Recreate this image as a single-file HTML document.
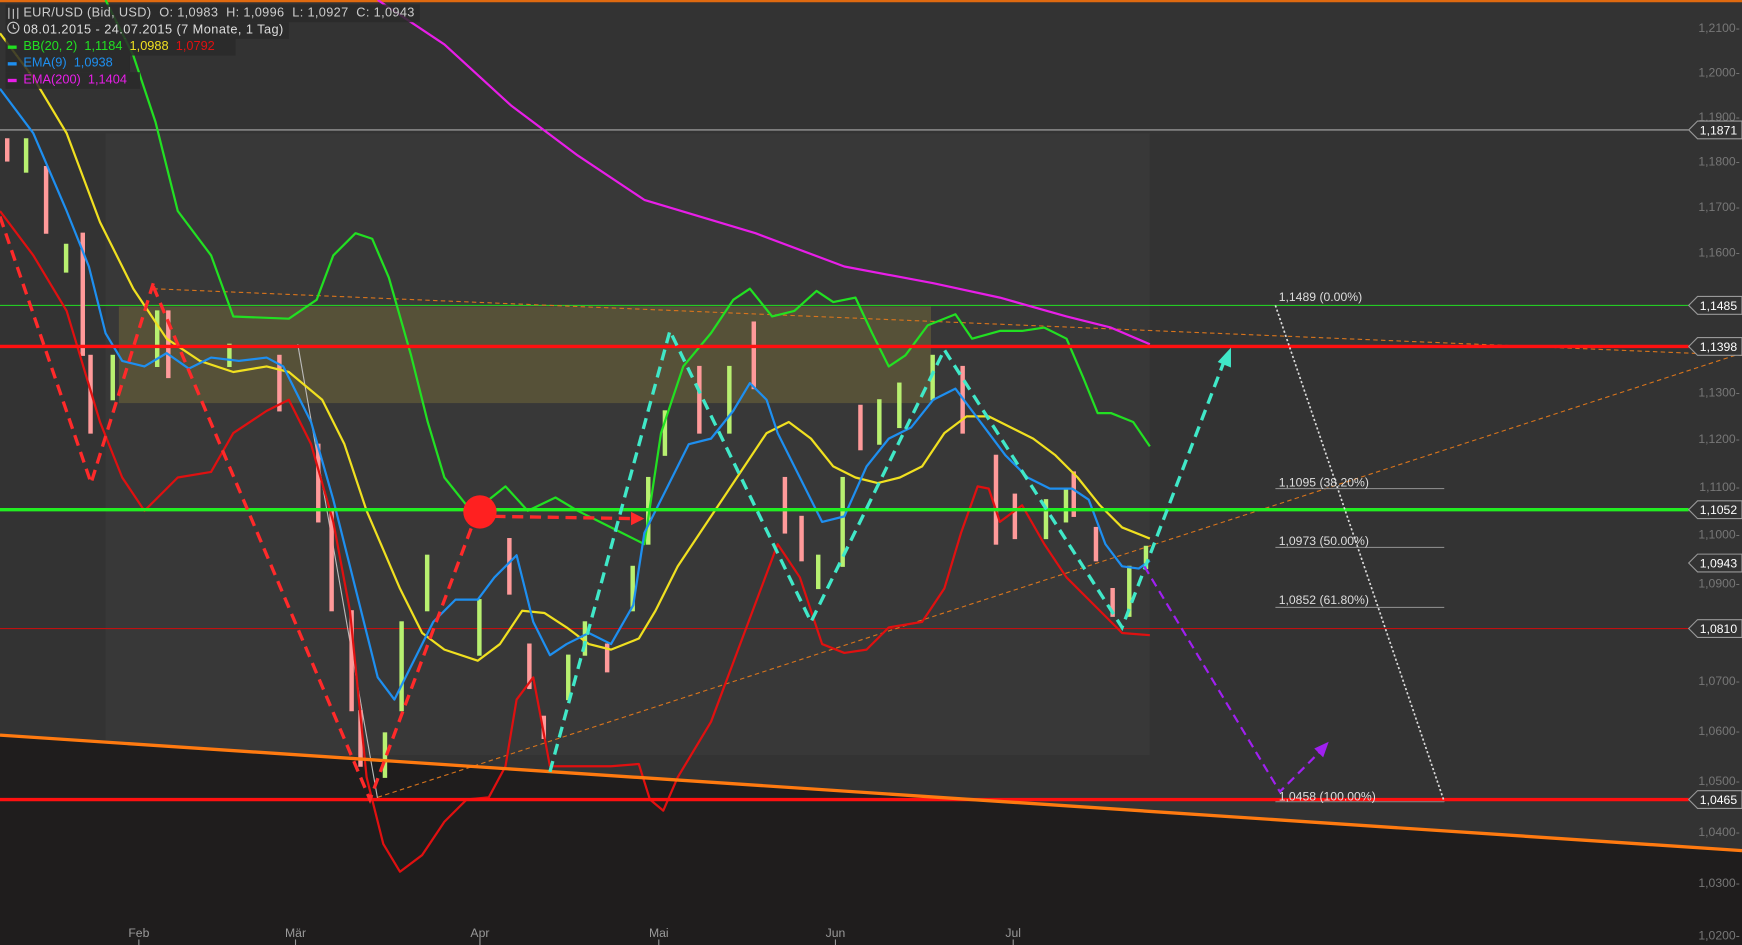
<!DOCTYPE html>
<html><head><meta charset="utf-8"><style>
html,body{margin:0;padding:0;background:#333;overflow:hidden}
svg{display:block}
text{font-family:"Liberation Sans",sans-serif;white-space:pre}
</style></head><body>
<svg width="1742" height="945" viewBox="0 0 1568 851" preserveAspectRatio="none" xmlns="http://www.w3.org/2000/svg">
<rect width="1568" height="851" fill="#333"/>
<rect x="95" y="120" width="940" height="560" fill="#383838"/>
<polygon points="0,662 1568,766 1568,851 0,851" fill="#1f1d1d"/>
<rect x="107" y="276" width="731" height="87" fill="#6b6238" opacity="0.6"/>
<line x1="0" y1="1" x2="1568" y2="1" stroke="#e06a10" stroke-width="2"/>
<line x1="0" y1="117" x2="1520" y2="117" stroke="#aaa" stroke-width="1"/>
<line x1="0" y1="275" x2="1520" y2="275" stroke="#22e022" stroke-width="1"/>
<line x1="0" y1="566" x2="1520" y2="566" stroke="#c01010" stroke-width="1"/>
<line x1="268" y1="310" x2="340" y2="720" stroke="#bbb" stroke-width="1"/>
<line x1="138" y1="260" x2="1568" y2="320" stroke="#d8741c" stroke-width="1" stroke-dasharray="4,3"/>
<line x1="340" y1="718" x2="1568" y2="318" stroke="#d8741c" stroke-width="1" stroke-dasharray="4,3"/>
<!-- candles -->
<g stroke-width="1">
<g fill="#ff9a9a" stroke="#ff9a9a">
<rect x="5" y="125" width="3" height="20"/><rect x="40" y="150" width="3" height="60"/><rect x="73" y="210" width="3" height="110"/><rect x="80" y="320" width="3" height="70"/><rect x="150" y="280" width="3" height="60"/><rect x="250" y="320" width="3" height="50"/><rect x="285" y="400" width="3" height="70"/><rect x="297" y="460" width="3" height="90"/><rect x="315" y="550" width="3" height="90"/><rect x="323" y="640" width="3" height="50"/><rect x="457" y="485" width="3" height="50"/><rect x="475" y="580" width="3" height="40"/><rect x="488" y="645" width="3" height="20"/><rect x="545" y="580" width="3" height="25"/><rect x="628" y="330" width="3" height="60"/><rect x="677" y="290" width="3" height="60"/><rect x="705" y="430" width="3" height="50"/><rect x="720" y="465" width="3" height="40"/><rect x="773" y="365" width="3" height="40"/><rect x="865" y="330" width="3" height="60"/><rect x="895" y="410" width="3" height="80"/><rect x="912" y="445" width="3" height="40"/><rect x="965" y="425" width="3" height="40"/><rect x="985" y="475" width="3" height="30"/><rect x="1000" y="530" width="3" height="25"/></g>
<g fill="#b8f070" stroke="#b8f070">
<rect x="22" y="125" width="3" height="30"/><rect x="58" y="220" width="3" height="25"/><rect x="100" y="320" width="3" height="40"/><rect x="140" y="280" width="3" height="50"/><rect x="205" y="310" width="3" height="20"/><rect x="345" y="660" width="3" height="40"/><rect x="360" y="560" width="3" height="80"/><rect x="383" y="500" width="3" height="50"/><rect x="430" y="540" width="3" height="50"/><rect x="510" y="590" width="3" height="40"/><rect x="525" y="560" width="3" height="30"/><rect x="568" y="510" width="3" height="40"/><rect x="582" y="430" width="3" height="60"/><rect x="597" y="370" width="3" height="40"/><rect x="655" y="330" width="3" height="60"/><rect x="735" y="500" width="3" height="30"/><rect x="757" y="430" width="3" height="80"/><rect x="790" y="360" width="3" height="40"/><rect x="808" y="345" width="3" height="40"/><rect x="838" y="320" width="3" height="40"/><rect x="940" y="450" width="3" height="35"/><rect x="958" y="440" width="3" height="30"/><rect x="1015" y="510" width="3" height="45"/><rect x="1030" y="492" width="3" height="20"/></g>
</g>
<g fill="none" stroke-linejoin="round">
<polyline stroke="#e81ee8" stroke-width="2" points="340,0 400,40 460,95 520,140 580,180 680,210 760,240 840,255 900,268 960,285 1000,295 1035,310"/>
<polyline stroke="#22e022" stroke-width="2" points="95,0 120,50 140,110 160,190 190,230 210,285 260,287 285,270 300,230 320,210 335,215 350,250 370,320 385,380 400,430 420,455 440,450 455,438 475,460 500,448 520,460 540,470 560,480 580,490 595,390 615,330 640,300 660,270 675,260 695,285 715,280 735,262 750,272 770,268 785,300 800,330 815,320 835,293 860,283 875,305 900,298 920,298 940,295 960,305 975,340 988,372 1000,372 1020,380 1035,402"/>
<polyline stroke="#f0e020" stroke-width="2" points="0,30 30,70 60,120 90,200 120,260 150,305 180,325 210,335 240,330 260,335 290,360 310,400 330,460 360,530 380,570 400,585 430,595 450,580 470,550 490,552 510,565 530,580 550,585 575,575 590,550 610,510 630,480 650,450 670,420 690,390 710,380 730,395 750,420 770,430 790,435 810,430 830,420 850,390 870,375 890,375 910,385 930,395 950,410 970,430 990,455 1010,475 1035,485"/>
<polyline stroke="#e01010" stroke-width="2" points="0,190 30,230 60,280 90,380 110,430 130,460 150,440 160,430 190,425 210,390 240,370 260,360 280,400 300,470 315,550 330,700 345,760 360,785 380,770 400,740 420,720 440,718 455,690 465,630 480,610 495,690 520,690 550,690 575,688 585,720 597,730 610,700 640,650 670,570 700,490 720,520 740,580 760,588 780,585 800,565 830,560 850,530 865,480 880,438 890,440 900,470 920,455 940,490 960,520 990,550 1010,570 1035,572"/>
<polyline stroke="#1e8ff0" stroke-width="2" points="0,80 30,120 60,190 80,240 95,300 110,325 130,330 150,318 170,332 190,322 215,325 240,322 255,330 280,380 300,450 320,530 340,610 355,630 370,600 390,560 410,540 430,540 445,520 465,500 480,560 495,590 510,580 530,570 550,580 570,545 580,480 600,440 620,400 640,395 660,370 675,345 690,360 700,390 720,430 740,470 760,465 780,420 800,395 820,385 840,360 860,350 875,370 890,390 905,410 925,430 945,440 965,440 980,450 995,490 1010,510 1025,512 1035,505"/>
</g>
<line x1="0" y1="312" x2="1520" y2="312" stroke="#ff1010" stroke-width="3"/>
<line x1="0" y1="459" x2="1520" y2="459" stroke="#22ee22" stroke-width="3"/>
<line x1="0" y1="720" x2="1520" y2="720" stroke="#ff1010" stroke-width="3"/>
<line x1="0" y1="662" x2="1568" y2="766" stroke="#ff7a10" stroke-width="3"/>
<polyline fill="none" stroke="#ff2a2a" stroke-width="3" stroke-dasharray="10,6" points="0,195 82,435 138,255"/>
<polyline fill="none" stroke="#ff2a2a" stroke-width="3" stroke-dasharray="10,6" points="138,258 333,720 430,460"/>
<line x1="445" y1="465" x2="570" y2="467" stroke="#ff2a2a" stroke-width="3" stroke-dasharray="10,6"/>
<polygon points="580,467 568,461 568,473" fill="#ff2a2a"/>
<circle cx="432" cy="461" r="15" fill="#ff2020"/>
<polyline fill="none" stroke="#40e8c8" stroke-width="3" stroke-dasharray="10,6" points="495,695 603,298 730,560 850,315 1010,565 1102,325"/>
<polygon points="1108,313 1096,326 1108,331" fill="#40e8c8"/>
<polyline fill="none" stroke="#a020f0" stroke-width="2" stroke-dasharray="8,5" points="1030,510 1152,713 1190,675"/>
<polygon points="1196,668 1183,674 1191,682" fill="#a020f0"/>
<line x1="1148" y1="275" x2="1300" y2="722" stroke="#ddd" stroke-width="1.5" stroke-dasharray="2,2"/>
<g stroke="#888" stroke-width="1"><line x1="1148" y1="440" x2="1300" y2="440"/><line x1="1148" y1="493" x2="1300" y2="493"/><line x1="1148" y1="547" x2="1300" y2="547"/><line x1="1148" y1="722" x2="1300" y2="722"/></g>
<g fill="#ddd" font-size="11"><text x="1151" y="271">1,1489 (0.00%)</text><text x="1151" y="438">1,1095 (38.20%)</text><text x="1151" y="491">1,0973 (50.00%)</text><text x="1151" y="544">1,0852 (61.80%)</text><text x="1151" y="721">1,0458 (100.00%)</text></g>
<g fill="#777" font-size="11" text-anchor="end">
<text x="1566" y="29">1,2100-</text><text x="1566" y="69">1,2000-</text><text x="1566" y="109">1,1900-</text><text x="1566" y="149">1,1800-</text><text x="1566" y="190">1,1700-</text><text x="1566" y="231">1,1600-</text><text x="1566" y="357">1,1300-</text><text x="1566" y="399">1,1200-</text><text x="1566" y="442">1,1100-</text><text x="1566" y="485">1,1000-</text><text x="1566" y="529">1,0900-</text><text x="1566" y="617">1,0700-</text><text x="1566" y="662">1,0600-</text><text x="1566" y="707">1,0500-</text><text x="1566" y="753">1,0400-</text><text x="1566" y="799">1,0300-</text><text x="1566" y="846">1,0200-</text>
</g>
<g font-size="11" fill="#fff">
<g stroke="#999" fill="#333"><polygon points="1520,117 1528,109 1568,109 1568,125 1528,125"/><polygon points="1520,275 1528,267 1568,267 1568,283 1528,283"/><polygon points="1520,312 1528,304 1568,304 1568,320 1528,320"/><polygon points="1520,459 1528,451 1568,451 1568,467 1528,467"/><polygon points="1520,507 1528,499 1568,499 1568,515 1528,515"/><polygon points="1520,566 1528,558 1568,558 1568,574 1528,574"/><polygon points="1520,720 1528,712 1568,712 1568,728 1528,728"/></g>
<text x="1530" y="121">1,1871</text><text x="1530" y="279">1,1485</text><text x="1530" y="316">1,1398</text><text x="1530" y="463">1,1052</text><text x="1530" y="511">1,0943</text><text x="1530" y="570">1,0810</text><text x="1530" y="724">1,0465</text>
</g>
<g fill="#999" font-size="11" text-anchor="middle"><text x="125" y="844">Feb</text><text x="266" y="844">Mär</text><text x="432" y="844">Apr</text><text x="593" y="844">Mai</text><text x="752" y="844">Jun</text><text x="912" y="844">Jul</text></g>
<g stroke="#999"><line x1="125" y1="846" x2="125" y2="851"/><line x1="266" y1="846" x2="266" y2="851"/><line x1="432" y1="846" x2="432" y2="851"/><line x1="593" y1="846" x2="593" y2="851"/><line x1="752" y1="846" x2="752" y2="851"/><line x1="912" y1="846" x2="912" y2="851"/></g>
<g fill="#2a2a2a" opacity="0.85"><rect x="5" y="4" width="373" height="16"/><rect x="5" y="20" width="255" height="15"/><rect x="5" y="35" width="207" height="15"/><rect x="5" y="50" width="112" height="15"/><rect x="5" y="65" width="121" height="15"/></g>
<g font-size="11.5"><text x="21" y="15" fill="#ccc" textLength="352">EUR/USD (Bid, USD)  O: 1,0983  H: 1,0996  L: 1,0927  C: 1,0943</text>
<text x="21" y="30" fill="#ddd" textLength="234">08.01.2015 - 24.07.2015 (7 Monate, 1 Tag)</text>
<text x="21" y="45" fill="#22e022">BB(20, 2)  1,1184  <tspan fill="#f0e020">1,0988</tspan>  <tspan fill="#e01010">1,0792</tspan></text>
<text x="21" y="60" fill="#1e8ff0">EMA(9)  1,0938</text>
<text x="21" y="75" fill="#e81ee8">EMA(200)  1,1404</text></g>
<g stroke="#ccc" fill="none"><line x1="8" y1="7" x2="8" y2="17"/><line x1="12" y1="8" x2="12" y2="17"/><line x1="16" y1="7" x2="16" y2="17"/><circle cx="12" cy="25" r="5"/><polyline points="12,22 12,25 14,26"/></g>
<rect x="7" y="41" width="8" height="3" fill="#22e022"/><rect x="7" y="56" width="8" height="3" fill="#1e8ff0"/><rect x="7" y="71" width="8" height="3" fill="#e81ee8"/>
</svg>
</body></html>
